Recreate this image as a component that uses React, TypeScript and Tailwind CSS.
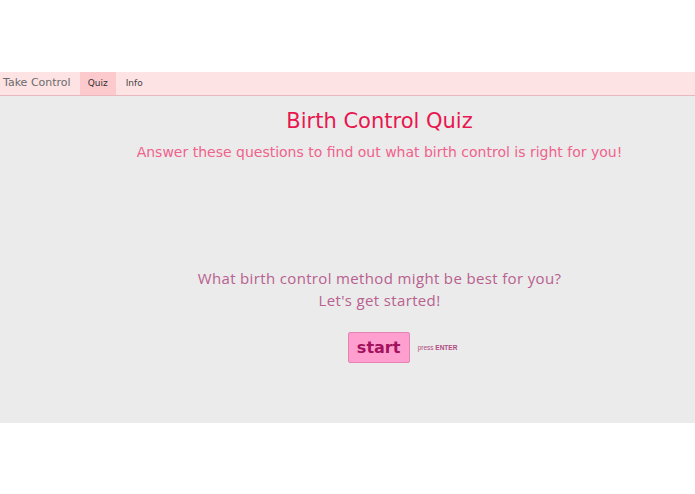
export default function App() {
  return (
    <div className="w-[695px] h-[494px] bg-white flex flex-col">
      <div className="h-[72px]" />
      <nav className="h-[24px] bg-[#fde3e4] border-b border-[#e9b8be] flex items-stretch font-['DejaVu_Sans',sans-serif]">
        <div className="pl-[3px] pr-[9px] flex items-center text-[11px] text-[#6b6b6b]">Take Control</div>
        <div className="w-[36px] bg-[#fcc9cd] flex items-center justify-center text-[9px] text-[#333]">Quiz</div>
        <div className="px-[10px] flex items-center text-[9px] text-[#444]">Info</div>
      </nav>
      <main className="h-[327px] bg-[#ebebeb] flex flex-col items-center pl-[64px]">
        <h1 className="mt-[10px] text-[21px] leading-[30px] text-[#e8174f] font-['DejaVu_Sans',sans-serif]">
          Birth Control Quiz
        </h1>
        <p className="mt-[6px] text-[14px] leading-[20px] text-[#f0628c] font-['DejaVu_Sans',sans-serif]">
          Answer these questions to find out what birth control is right for you!
        </p>
        <div className="mt-[105px] flex flex-col items-center text-[15px] leading-[22px] text-[#b8608f] font-['Open_Sans',sans-serif] tracking-[0.35px]">
          <p>What birth control method might be best for you?</p>
          <p>Let's get started!</p>
        </div>
        <div className="mt-[21px] ml-[46px] flex items-center gap-[8px]">
          <button className="w-[62px] h-[31px] bg-[#ff9fd0] border border-[#e483b4] rounded-[2px] text-[16px] font-bold text-[#a3125c] font-['DejaVu_Sans',sans-serif]">
            start
          </button>
          <span className="text-[6.5px] text-[#b04a80] font-['Liberation_Sans',sans-serif]">
            press <b>ENTER</b>
          </span>
        </div>
      </main>
    </div>
  );
}
